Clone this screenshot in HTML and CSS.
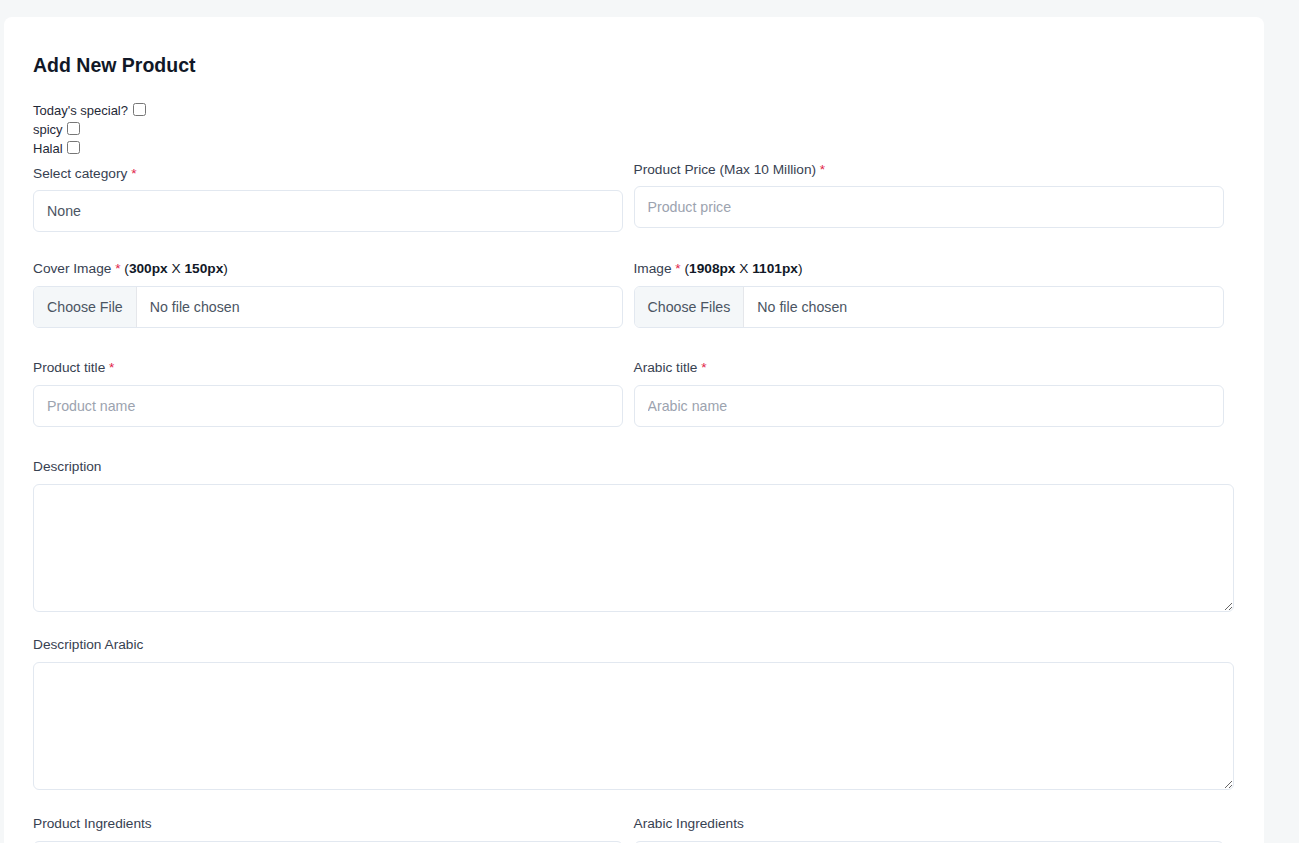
FILE: index.html
```html
<!DOCTYPE html>
<html lang="en">
<head>
<meta charset="utf-8">
<title>Add New Product</title>
<link rel="stylesheet" href="styles.css">
</head>
<body>
<main class="card">
  <h1 class="title">Add New Product</h1>
  <div class="checks">
    <div class="check-line">Today's special? <input type="checkbox" class="cb"></div>
    <div class="check-line">spicy <input type="checkbox" class="cb"></div>
    <div class="check-line">Halal <input type="checkbox" class="cb"></div>
  </div>

  <div class="row row-first">
    <div class="cell cell-pad">
      <label class="lbl">Select category <span class="req">*</span></label>
      <div class="field"><span class="val">None</span></div>
    </div>
    <div class="cell">
      <label class="lbl">Product Price (Max 10 Million) <span class="req">*</span></label>
      <input class="field input" type="text" placeholder="Product price">
    </div>
  </div>

  <div class="row">
    <div class="cell">
      <label class="lbl">Cover Image <span class="req">*</span> <span class="dim">(<b>300px</b> X <b>150px</b>)</span></label>
      <div class="field file"><span class="file-btn">Choose File</span><span class="file-name">No file chosen</span></div>
    </div>
    <div class="cell">
      <label class="lbl">Image <span class="req">*</span> <span class="dim">(<b>1908px</b> X <b>1101px</b>)</span></label>
      <div class="field file"><span class="file-btn">Choose Files</span><span class="file-name">No file chosen</span></div>
    </div>
  </div>

  <div class="row">
    <div class="cell">
      <label class="lbl">Product title <span class="req">*</span></label>
      <input class="field input" type="text" placeholder="Product name">
    </div>
    <div class="cell">
      <label class="lbl">Arabic title <span class="req">*</span></label>
      <input class="field input" type="text" placeholder="Arabic name">
    </div>
  </div>

  <div class="block">
    <label class="lbl">Description</label>
    <textarea class="area"></textarea>
  </div>

  <div class="block block-last">
    <label class="lbl">Description Arabic</label>
    <textarea class="area"></textarea>
  </div>

  <div class="row">
    <div class="cell">
      <label class="lbl">Product Ingredients</label>
      <input class="field input" type="text">
    </div>
    <div class="cell">
      <label class="lbl">Arabic Ingredients</label>
      <input class="field input" type="text">
    </div>
  </div>
</main>
</body>
</html>
```
FILE: styles.css
```css
html {
  overflow: hidden;
}
body {
  margin: 0;
  background: #f5f7f8;
  font-family: "Liberation Sans", Arial, sans-serif;
  color: #374151;
}
.card {
  width: 1260px;
  box-sizing: border-box;
  margin: 17px 0 0 4px;
  padding: 34px 30px 40px 29px;
  background: #ffffff;
  border-radius: 8px;
  min-height: 900px;
}
.title {
  margin: 0 0 22px;
  font-size: 19.5px;
  line-height: 28px;
  font-weight: 700;
  color: #111827;
}
.checks {
  margin-bottom: 3px;
}
.check-line {
  font-size: 13px;
  line-height: 19px;
  height: 19px;
  color: #1f2937;
}
.cb {
  width: 13px;
  height: 13px;
  margin: 0 0 0 1px;
  vertical-align: -1px;
}
.row {
  display: grid;
  grid-template-columns: 1fr 1fr;
  margin-bottom: 31px;
}
.row-first {
  margin-bottom: 28px;
}
.row-first .lbl {
  margin-bottom: 7px;
}
.cell {
  padding-right: 10.5px;
  min-width: 0;
}
.cell-pad {
  padding-top: 4px;
}
.lbl {
  display: block;
  font-size: 13.7px;
  line-height: 18px;
  margin-bottom: 8px;
  color: #374151;
}
.req {
  color: #e11d48;
}
.dim {
  color: #111827;
}
.field {
  display: flex;
  align-items: center;
  box-sizing: border-box;
  width: 100%;
  height: 42px;
  border: 1px solid #e2e8f0;
  border-radius: 6px;
  background: #ffffff;
  font-family: inherit;
  font-size: 14.2px;
  color: #4b5563;
}
.val {
  padding-left: 13px;
}
.input {
  padding: 0 13px;
  outline: none;
}
.input::placeholder {
  color: #9ca3af;
}
.file {
  overflow: hidden;
}
.file-btn {
  display: flex;
  align-items: center;
  height: 100%;
  padding: 0 13px;
  background: #f4f7f9;
  border-right: 1px solid #e5e7eb;
  color: #4b5563;
}
.file-name {
  padding-left: 13px;
  color: #4b5563;
}
.block {
  margin-bottom: 24px;
}
.block-last {
  margin-bottom: 25px;
}
.area {
  display: block;
  box-sizing: border-box;
  width: 100%;
  height: 128px;
  margin: 0;
  border: 1px solid #e2e8f0;
  border-radius: 6px;
  font-family: inherit;
  font-size: 14px;
  outline: none;
}
```
